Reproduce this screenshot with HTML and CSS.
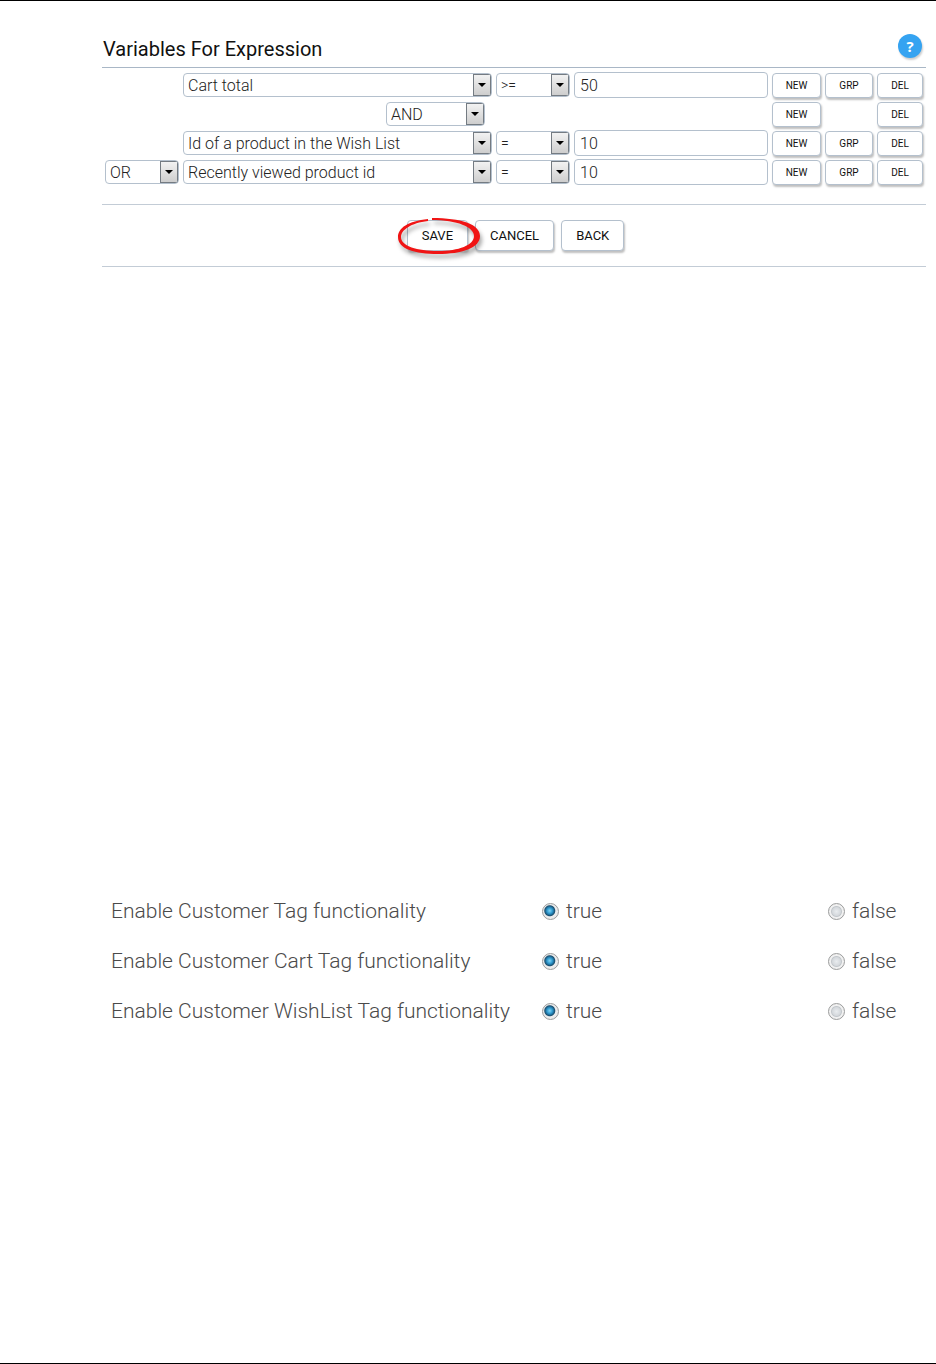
FILE: index.html
```html
<!DOCTYPE html>
<html lang="en">
<head>
  <meta charset="UTF-8" />
  <meta name="viewport" content="width=device-width, initial-scale=1.0"/>
  <title>Variables For Expression</title>
  <link rel="stylesheet" href="styles.css">
</head>
<body>

  <form class="expression">
    <div class="header">
      <h1>Variables For Expression</h1>
      <button type="button" class="help" aria-label="Help">?</button>
    </div>

    <div class="rows">
      <div class="row">
        <select class="field" aria-label="Variable"><option>Cart total</option></select>
        <select class="operator" aria-label="Operator"><option>&gt;=</option></select>
        <input class="value" type="text" value="50" aria-label="Value">
        <button type="button" class="new">NEW</button>
        <button type="button" class="grp">GRP</button>
        <button type="button" class="del">DEL</button>
      </div>
      <div class="row">
        <select class="group-join" aria-label="Group condition"><option>AND</option></select>
        <button type="button" class="new">NEW</button>
        <button type="button" class="del">DEL</button>
      </div>
      <div class="row">
        <select class="field" aria-label="Variable"><option>Id of a product in the Wish List</option></select>
        <select class="operator" aria-label="Operator"><option>=</option></select>
        <input class="value" type="text" value="10" aria-label="Value">
        <button type="button" class="new">NEW</button>
        <button type="button" class="grp">GRP</button>
        <button type="button" class="del">DEL</button>
      </div>
      <div class="row">
        <select class="join" aria-label="Condition"><option>OR</option></select>
        <select class="field" aria-label="Variable"><option>Recently viewed product id</option></select>
        <select class="operator" aria-label="Operator"><option>=</option></select>
        <input class="value" type="text" value="10" aria-label="Value">
        <button type="button" class="new">NEW</button>
        <button type="button" class="grp">GRP</button>
        <button type="button" class="del">DEL</button>
      </div>
    </div>

    <div class="actions">
      <div class="marked">
        <button type="button">SAVE</button>
        <svg class="marker" width="92" height="48" viewBox="0 0 92 48" aria-hidden="true">
          <path fill="#f01414" fill-rule="evenodd" d="M34 4C14 6 4 13 4 22C4 34 21 39 44 39C68 39 86 33 86 21C86 9 67 3 38 3L38 5C63 5 80 12 80 21C80 30 65 36 44 36C23 36 7 31 7 22C7 15 17 8 34 6Z"/>
        </svg>
      </div>
      <button type="button">CANCEL</button>
      <button type="button">BACK</button>
    </div>
  </form>

  <form class="settings">
    <fieldset>
      <legend>Enable Customer Tag functionality</legend>
      <label><input type="radio" name="tag" checked> true</label>
      <label><input type="radio" name="tag"> false</label>
    </fieldset>
    <fieldset>
      <legend>Enable Customer Cart Tag functionality</legend>
      <label><input type="radio" name="cart-tag" checked> true</label>
      <label><input type="radio" name="cart-tag"> false</label>
    </fieldset>
    <fieldset>
      <legend>Enable Customer WishList Tag functionality</legend>
      <label><input type="radio" name="wishlist-tag" checked> true</label>
      <label><input type="radio" name="wishlist-tag"> false</label>
    </fieldset>
  </form>

</body>
</html>
```
FILE: styles.css
```css
* {
  box-sizing: border-box;
}
body {
  margin: 0;
  min-height: 100vh;
  padding: 30px 10px 0 102px;
  border-top: 1px solid #000;
  border-bottom: 1px solid #000;
  background: #fff;
  color: #111;
  font-family: Roboto, sans-serif;
}
button, select, input {
  font-family: inherit;
  margin: 0;
}

/* Header */
.header {
  display: flex;
  justify-content: space-between;
  align-items: center;
  height: 37px;
  padding: 0 4px 0 1px;
  border-bottom: 1px solid #a9b7c6;
}
h1 {
  margin: 0;
  font-size: 20px;
  font-weight: 400;
}
.help {
  width: 24px;
  height: 24px;
  margin-bottom: 6px;
  padding: 0;
  border: none;
  border-radius: 50%;
  background: #35a3f1;
  color: #fff;
  font: 700 15px "Open Sans", sans-serif;
  box-shadow: 1px 2px 2px rgba(0,0,0,0.2);
}

/* Expression rows */
.rows {
  display: grid;
  gap: 3px;
  padding: 4px 3px 19px 3px;
  border-bottom: 1px solid #c3ccd6;
}
.row {
  display: grid;
  grid-template-columns: 74px 1fr 74px 194px 49px 48px 46px;
  grid-template-rows: 26px;
  column-gap: 4px;
  align-items: center;
}
.row > * {
  grid-row: 1;
}
.join { grid-column: 1; }
.field { grid-column: 2; }
.group-join {
  grid-column: 2;
  justify-self: end;
  width: 99px;
  margin-right: 7px;
}
.operator { grid-column: 3; }
.value { grid-column: 4; }
.new { grid-column: 5; }
.grp { grid-column: 6; }
.del { grid-column: 7; }

select, .value {
  height: 24px;
  min-width: 0;
  padding: 0 20px 0 5px;
  border: 1px solid #b4c0cd;
  border-radius: 4px;
  background-color: #fff;
  color: #222;
  font-size: 16px;
  font-weight: 300;
}
select {
  padding-left: 4px;
  appearance: none;
  background-image: url("data:image/svg+xml,%3Csvg xmlns='http://www.w3.org/2000/svg' width='18' height='22'%3E%3ClinearGradient id='g' x2='0' y2='1'%3E%3Cstop stop-color='%23f3f3f3'/%3E%3Cstop offset='1' stop-color='%23cdcdcd'/%3E%3C/linearGradient%3E%3Crect x='.5' y='.5' width='17' height='21' fill='url(%23g)' stroke='%23747b82'/%3E%3Cpath d='M5 9h8l-4 4z'/%3E%3C/svg%3E");
  background-repeat: no-repeat;
  background-position: right center;
}
.operator {
  font-size: 14px;
}
.value {
  height: 26px;
}

.row button, .actions button {
  border: 1px solid #b4c0cd;
  border-radius: 4px;
  background: #fff;
  color: #111;
  box-shadow: 1px 2px 2px rgba(0,0,0,0.25);
}
.row button {
  height: 25px;
  padding: 0;
  font-size: 10px;
}

/* Bottom buttons */
.actions {
  display: flex;
  justify-content: center;
  gap: 7px;
  padding: 15px 0 15px 3px;
  border-bottom: 1px solid #c3ccd6;
}
.actions button {
  height: 31px;
  padding: 0 14px;
  font-size: 13px;
}
.marked {
  position: relative;
}
.marker {
  position: absolute;
  top: -5px;
  left: -13px;
  pointer-events: none;
  filter: drop-shadow(2px 4px 2px rgba(0,0,0,0.35));
}

/* Settings */
.settings {
  margin-top: 619px;
  padding-left: 9px;
  color: #4a4a4a;
  font-size: 21px;
  font-weight: 300;
}
fieldset {
  display: grid;
  grid-template-columns: 1fr 286px 98px;
  align-items: center;
  height: 50px;
  margin: 0;
  padding: 0;
  border: none;
}
legend {
  float: left;
  padding: 0;
}
label {
  display: flex;
  align-items: center;
  gap: 7px;
}
input[type="radio"] {
  appearance: none;
  width: 17px;
  height: 17px;
  border: 1px solid #9a9b9b;
  border-radius: 50%;
  background: radial-gradient(circle, #e9ecef 0, #d5d9dd 4px, #c3c8cc 5px, #f1f1f1 6px);
}
input[type="radio"]:checked {
  background: radial-gradient(circle at 45% 45%, #7fd6f8 0, #2a93c8 3px, #1b4f70 5px, #ececec 6px);
}
```
